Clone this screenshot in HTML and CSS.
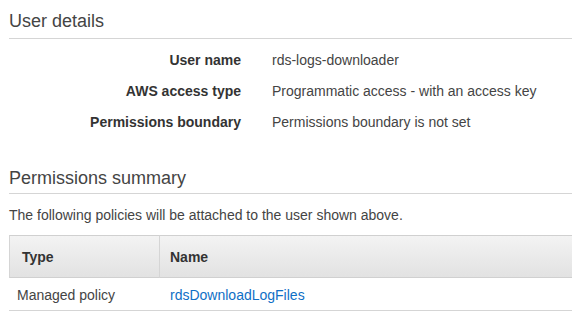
FILE: index.html
```html
<!DOCTYPE html>
<html lang="en">
<head>
    <meta charset="UTF-8">
    <meta name="viewport" content="width=device-width, initial-scale=1.0">
    <title>Review</title>
    <link rel="stylesheet" href="styles.css">
</head>
<body>
    <div class="page">
        <h2 class="section-title">User details</h2>

        <div class="details">
            <div class="label">User name</div>
            <div class="value">rds-logs-downloader</div>
            <div class="label">AWS access type</div>
            <div class="value">Programmatic access - with an access key</div>
            <div class="label">Permissions boundary</div>
            <div class="value">Permissions boundary is not set</div>
        </div>

        <h2 class="section-title summary-title">Permissions summary</h2>
        <p class="intro">The following policies will be attached to the user shown above.</p>

        <table class="policies">
            <colgroup>
                <col class="col-type">
                <col>
            </colgroup>
            <thead>
                <tr>
                    <th>Type</th>
                    <th>Name</th>
                </tr>
            </thead>
            <tbody>
                <tr>
                    <td>Managed policy</td>
                    <td><a href="#">rdsDownloadLogFiles</a></td>
                </tr>
            </tbody>
        </table>
    </div>
</body>
</html>
```

FILE: styles.css
```css
body {
    font-family: 'Liberation Sans', Arial, sans-serif;
    font-size: 14px;
    line-height: 17px;
    color: #444;
    background: #fff;
    margin: 0;
    overflow: hidden;
}

.page {
    padding: 10px 0 0 9px;
}

.section-title {
    font-size: 18px;
    font-weight: normal;
    line-height: 22px;
    color: #444;
    margin: 0;
    padding: 0 0 6px 0;
    border-bottom: 1px solid #d5d5d5;
}

.summary-title {
    margin-top: 36px;
    padding-bottom: 4px;
}

.details {
    display: grid;
    grid-template-columns: 232px 1fr;
    column-gap: 31px;
    row-gap: 14px;
    margin-top: 13px;
}

.label {
    text-align: right;
    font-weight: bold;
    color: #333;
}

.intro {
    margin: 13px 0 11px;
}

.policies {
    width: 100%;
    table-layout: fixed;
    border-collapse: separate;
    border-spacing: 0;
}

.col-type {
    width: 150px;
}

.policies th {
    text-align: left;
    font-weight: bold;
    color: #333;
    padding: 13px 10px 11px 10px;
    background: linear-gradient(#f3f3f3, #e2e2e2);
    border-top: 1px solid #d0d0d0;
    border-bottom: 1px solid #d0d0d0;
    border-left: 1px solid #d5d5d5;
}

.policies th:first-child {
    padding-left: 12px;
}

.policies td {
    padding: 9px 11px 6px;
    border-bottom: 1px solid #d5d5d5;
}

.policies td:first-child {
    padding-left: 8px;
}

.policies a {
    color: #0f6fc6;
    text-decoration: none;
}
```
